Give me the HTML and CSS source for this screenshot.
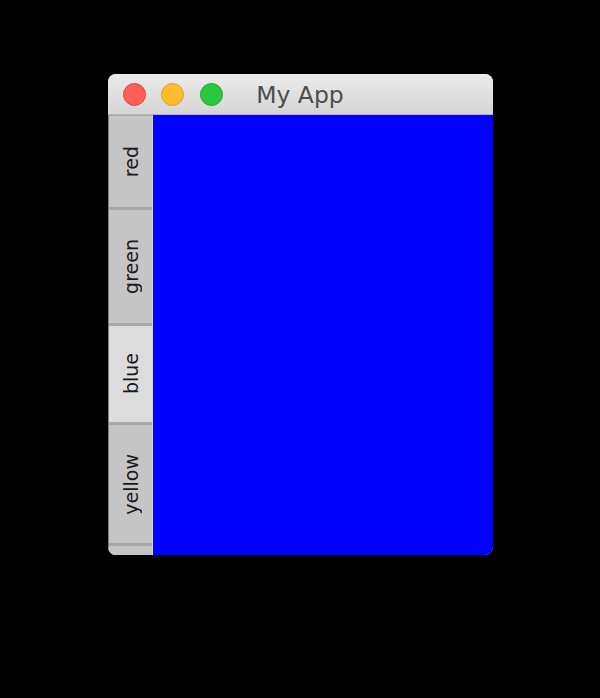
FILE: index.html
```html
<!DOCTYPE html>
<html>
<head>
<meta charset="utf-8">
<link rel="stylesheet" href="styles.css">
</head>
<body>
<div class="window">
  <div class="titlebar">
    <div class="lights">
      <span class="light red"></span>
      <span class="light yellow"></span>
      <span class="light green"></span>
    </div>
    <div class="title">My App</div>
  </div>
  <div class="content">
    <div class="tabs">
      <div class="tab t-red"><span class="label">red</span></div>
      <div class="tab t-green"><span class="label">green</span></div>
      <div class="tab t-blue active"><span class="label">blue</span></div>
      <div class="tab t-yellow"><span class="label">yellow</span></div>
      <div class="tab-rest"></div>
    </div>
    <div class="pane"></div>
  </div>
</div>
</body>
</html>
```
FILE: styles.css
```css
html, body {
  margin: 0;
  padding: 0;
  background: #000;
  height: 100%;
}
body {
  display: flex;
  justify-content: center;
  align-items: flex-start;
  padding-top: 74px;
  box-sizing: border-box;
  font-family: "DejaVu Sans", sans-serif;
}
.window {
  width: 385px;
  height: 481px;
  border-radius: 8px;
  overflow: hidden;
  display: flex;
  flex-direction: column;
  background: #c4c4c4;
}
.titlebar {
  height: 41px;
  flex: none;
  background: linear-gradient(#ebebeb, #d5d5d5);
  border-bottom: 1px solid #b5b5b5;
  box-sizing: border-box;
  display: flex;
  align-items: center;
  position: relative;
}
.lights {
  display: flex;
  gap: 15.5px;
  padding-left: 15px;
  padding-top: 1px;
}
.light {
  width: 23px;
  height: 23px;
  border-radius: 50%;
  box-sizing: border-box;
}
.light.red { background: #fe5f57; border: 1px solid #e2463f; }
.light.yellow { background: #febc2e; border: 1px solid #e0a023; }
.light.green { background: #28c840; border: 1px solid #1aab29; }
.title {
  position: absolute;
  left: 0;
  right: 0;
  top: 0;
  bottom: 0;
  display: flex;
  align-items: center;
  justify-content: center;
  font-size: 23.5px;
  color: #4d4d4d;
  padding-top: 1px;
}
.content {
  flex: 1;
  display: flex;
  min-height: 0;
}
.tabs {
  width: 45px;
  flex: none;
  display: flex;
  flex-direction: column;
  background: #c4c4c4;
  border-left: 1px solid #7e7e7e;
  border-right: 1px solid #d8d8d8;
  box-sizing: border-box;
  padding-top: 1px;
  border-top: 1px solid #a9a9a9;
}
.tab {
  display: flex;
  align-items: center;
  justify-content: center;
  background: #c5c5c5;
  border-bottom: 3px solid #a8a8a8;
  box-sizing: border-box;
}
.tab.active { background: #dcdcdc; }
.t-red { height: 93px; }
.t-green { height: 116px; }
.t-blue { height: 99px; }
.t-yellow { height: 121px; }
.tab-rest { flex: 1; background: #c5c5c5; }
.label {
  writing-mode: vertical-rl;
  transform: rotate(180deg);
  font-size: 19px;
  color: #1a1a1a;
  margin-left: 1px;
}
.pane {
  flex: 1;
  background: #0000ff;
}
```
